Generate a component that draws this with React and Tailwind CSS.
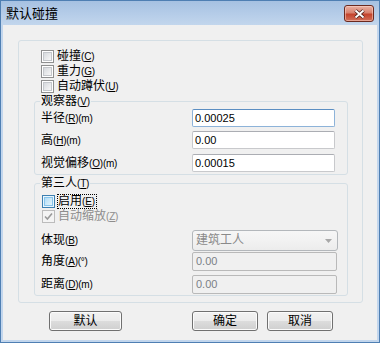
import React from "react";

// mnemonic like (C) with underlined key
const Key = ({ k }) => (
  <span className="text-[10px] tracking-[-0.2px]">
    (<span className="underline underline-offset-[1px]">{k}</span>)
  </span>
);

const Unit = ({ u }) => <span className="text-[10px] tracking-[-0.3px]">({u})</span>;

const Box = ({ state = "normal" }) => {
  if (state === "hot") {
    return (
      <div className="w-[13px] h-[13px] shrink-0 border border-[#3c7fb1] bg-[#eaf6fd] p-[1px]">
        <div className="w-full h-full border border-[#86c4ec] bg-[linear-gradient(135deg,#b1dcf6,#e3f4fc)]" />
      </div>
    );
  }
  if (state === "disabledChecked") {
    return (
      <div className="w-[13px] h-[13px] shrink-0 border border-[#bcbcbc] bg-[#f4f4f4] flex items-center justify-center">
        <svg width="11" height="11" viewBox="0 0 11 11">
          <path d="M2 5.5 L4.4 8 L9 2.5" fill="none" stroke="#9a9a9a" strokeWidth="1.6" />
        </svg>
      </div>
    );
  }
  return (
    <div className="w-[13px] h-[13px] shrink-0 border border-[#8e8f8f] bg-white p-[1px]">
      <div className="w-full h-full border border-[#c4c7cb] bg-[linear-gradient(135deg,#d6d9dd,#f7f7f7)]" />
    </div>
  );
};

const Check = ({ text, k, state, focus, disabled }) => (
  <div className="h-[15px] flex items-center">
    <Box state={state} />
    {focus ? (
      <span className="ml-[2px] border border-dotted border-black leading-[13px] pr-[1px]">
        {text}
        <Key k={k} />
      </span>
    ) : (
      <span className={"ml-[3px] leading-[15px] " + (disabled ? "text-[#8d8d8d]" : "")}>
        {text}
        <Key k={k} />
      </span>
    )}
  </div>
);

const Field = ({ value, focused, h = "h-[18px]", w = "w-[143px]" }) => (
  <div
    className={`${h} ${w} rounded-[2px] border bg-white pl-[2px] flex items-center text-[11px] ${
      focused ? "border-[#8db3d9] border-t-[#5b8ec2]" : "border-[#c8c9cc] border-t-[#abadb3]"
    }`}
  >
    {value}
  </div>
);

const DisabledField = ({ value }) => (
  <div className="h-[19px] w-[145px] rounded-[2px] border border-[#b9b9b9] bg-[#f0f0f0] pl-[3px] flex items-center text-[11px] text-[#7b7f86]">
    {value}
  </div>
);

const Button = ({ children, w }) => (
  <button
    type="button"
    className={`${w} h-[20px] border border-[#707070] rounded-[3px] bg-[linear-gradient(#f2f2f2,#ebebeb_50%,#dddddd_50%,#cfcfcf)] shadow-[inset_0_0_0_1px_#fbfbfb] text-[12px] leading-[18px] text-black`}
  >
    {children}
  </button>
);

export default function App() {
  return (
    <div className="w-[380px] h-[343px] flex flex-col border border-[#4f7fb3] bg-[linear-gradient(#a6c1e2,#c2d6ed_24px,#c2d6ed)] font-['Liberation_Sans','Noto_Sans_CJK_SC',sans-serif] text-[12px] leading-[15px] text-black">
      {/* title bar */}
      <div className="h-[24px] shrink-0 flex items-start justify-between pl-[5px] pr-[5px]">
        <span className="mt-[5px] text-[13px] leading-[15px]">默认碰撞</span>
        <div className="mt-[4px] w-[30px] h-[17px] rounded-[3px] border border-[#6b2a20] bg-[linear-gradient(#eab0a2,#d8826f_45%,#c4432c_55%,#d2705a)] shadow-[inset_0_0_0_1px_rgba(255,220,210,0.5)] flex items-center justify-center">
          <svg width="13" height="10" viewBox="0 0 13 10">
            <path d="M2.5 1.5 L10.5 8.5 M10.5 1.5 L2.5 8.5" stroke="#4a1d17" strokeWidth="3.6" />
            <path d="M2.5 1.5 L10.5 8.5 M10.5 1.5 L2.5 8.5" stroke="#ffffff" strokeWidth="1.9" />
          </svg>
        </div>
      </div>

      {/* client area */}
      <div className="flex-1 mx-[2px] mb-[2px] bg-[#f0f0f0] flex flex-col">
        <div className="mt-[15px] ml-[15px] w-[345px] h-[263px] shrink-0 border border-[#d5dfe5] rounded-[3px] flex flex-col pt-[8px]">
          <div className="pl-[22px] flex flex-col">
            <Check text="碰撞" k="C" />
            <Check text="重力" k="G" />
            <Check text="自动蹲伏" k="U" />
          </div>

          <fieldset className="ml-[15px] w-[314px] border border-[#d5dfe5] rounded-[3px] pb-[2px]">
            <legend className="ml-[5px] px-[1px] leading-[14px]">
              观察器<Key k="V" />
            </legend>
            <div className="flex items-center h-[18px] pl-[6px]">
              <span className="w-[151px]">
                半径<Key k="R" />
                <Unit u="m" />
              </span>
              <Field value="0.00025" focused />
            </div>
            <div className="mt-[4px] flex items-center h-[18px] pl-[6px]">
              <span className="w-[151px]">
                高<Key k="H" />
                <Unit u="m" />
              </span>
              <Field value="0.00" />
            </div>
            <div className="mt-[5px] flex items-center h-[18px] pl-[6px]">
              <span className="w-[151px]">
                视觉偏移<Key k="O" />
                <Unit u="m" />
              </span>
              <Field value="0.00015" />
            </div>
          </fieldset>

          <fieldset className="mt-[1px] ml-[15px] w-[314px] border border-[#d5dfe5] rounded-[3px] pb-[1px]">
            <legend className="ml-[5px] px-[1px] leading-[14px]">
              第三人<Key k="T" />
            </legend>
            <div className="mt-[3px] pl-[7px] flex flex-col">
              <Check text="启用" k="E" state="hot" focus />
              <Check text="自动缩放" k="Z" state="disabledChecked" disabled />
            </div>
            <div className="mt-[6px] flex items-center h-[21px] pl-[6px]">
              <span className="w-[151px]">
                体现<Key k="B" />
              </span>
              <div className="w-[146px] h-[21px] border border-[#b3b7bb] rounded-[3px] bg-[linear-gradient(#f6f6f6,#f2f2f2_50%,#ececec)] flex items-center pl-[3px] text-[#8a8a8a]">
                <span className="flex-1">建筑工人</span>
                <svg width="7" height="4" viewBox="0 0 7 4" className="mr-[5px]">
                  <path d="M0 0 H7 L3.5 4 Z" fill="#a8a8a8" />
                </svg>
              </div>
            </div>
            <div className="mt-[1px] flex items-center h-[19px] pl-[6px]">
              <span className="w-[151px]">
                角度<Key k="A" />
                <Unit u="°" />
              </span>
              <DisabledField value="0.00" />
            </div>
            <div className="mt-[4px] flex items-center h-[19px] pl-[6px]">
              <span className="w-[151px]">
                距离<Key k="D" />
                <Unit u="m" />
              </span>
              <DisabledField value="0.00" />
            </div>
          </fieldset>
        </div>

        {/* buttons */}
        <div className="mt-[8px] flex h-[20px] pl-[46px] pr-[44px]">
          <Button w="w-[73px]">默认</Button>
          <div className="flex-1" />
          <Button w="w-[66px]">确定</Button>
          <div className="w-[9px]" />
          <Button w="w-[66px]">取消</Button>
        </div>
      </div>
    </div>
  );
}
